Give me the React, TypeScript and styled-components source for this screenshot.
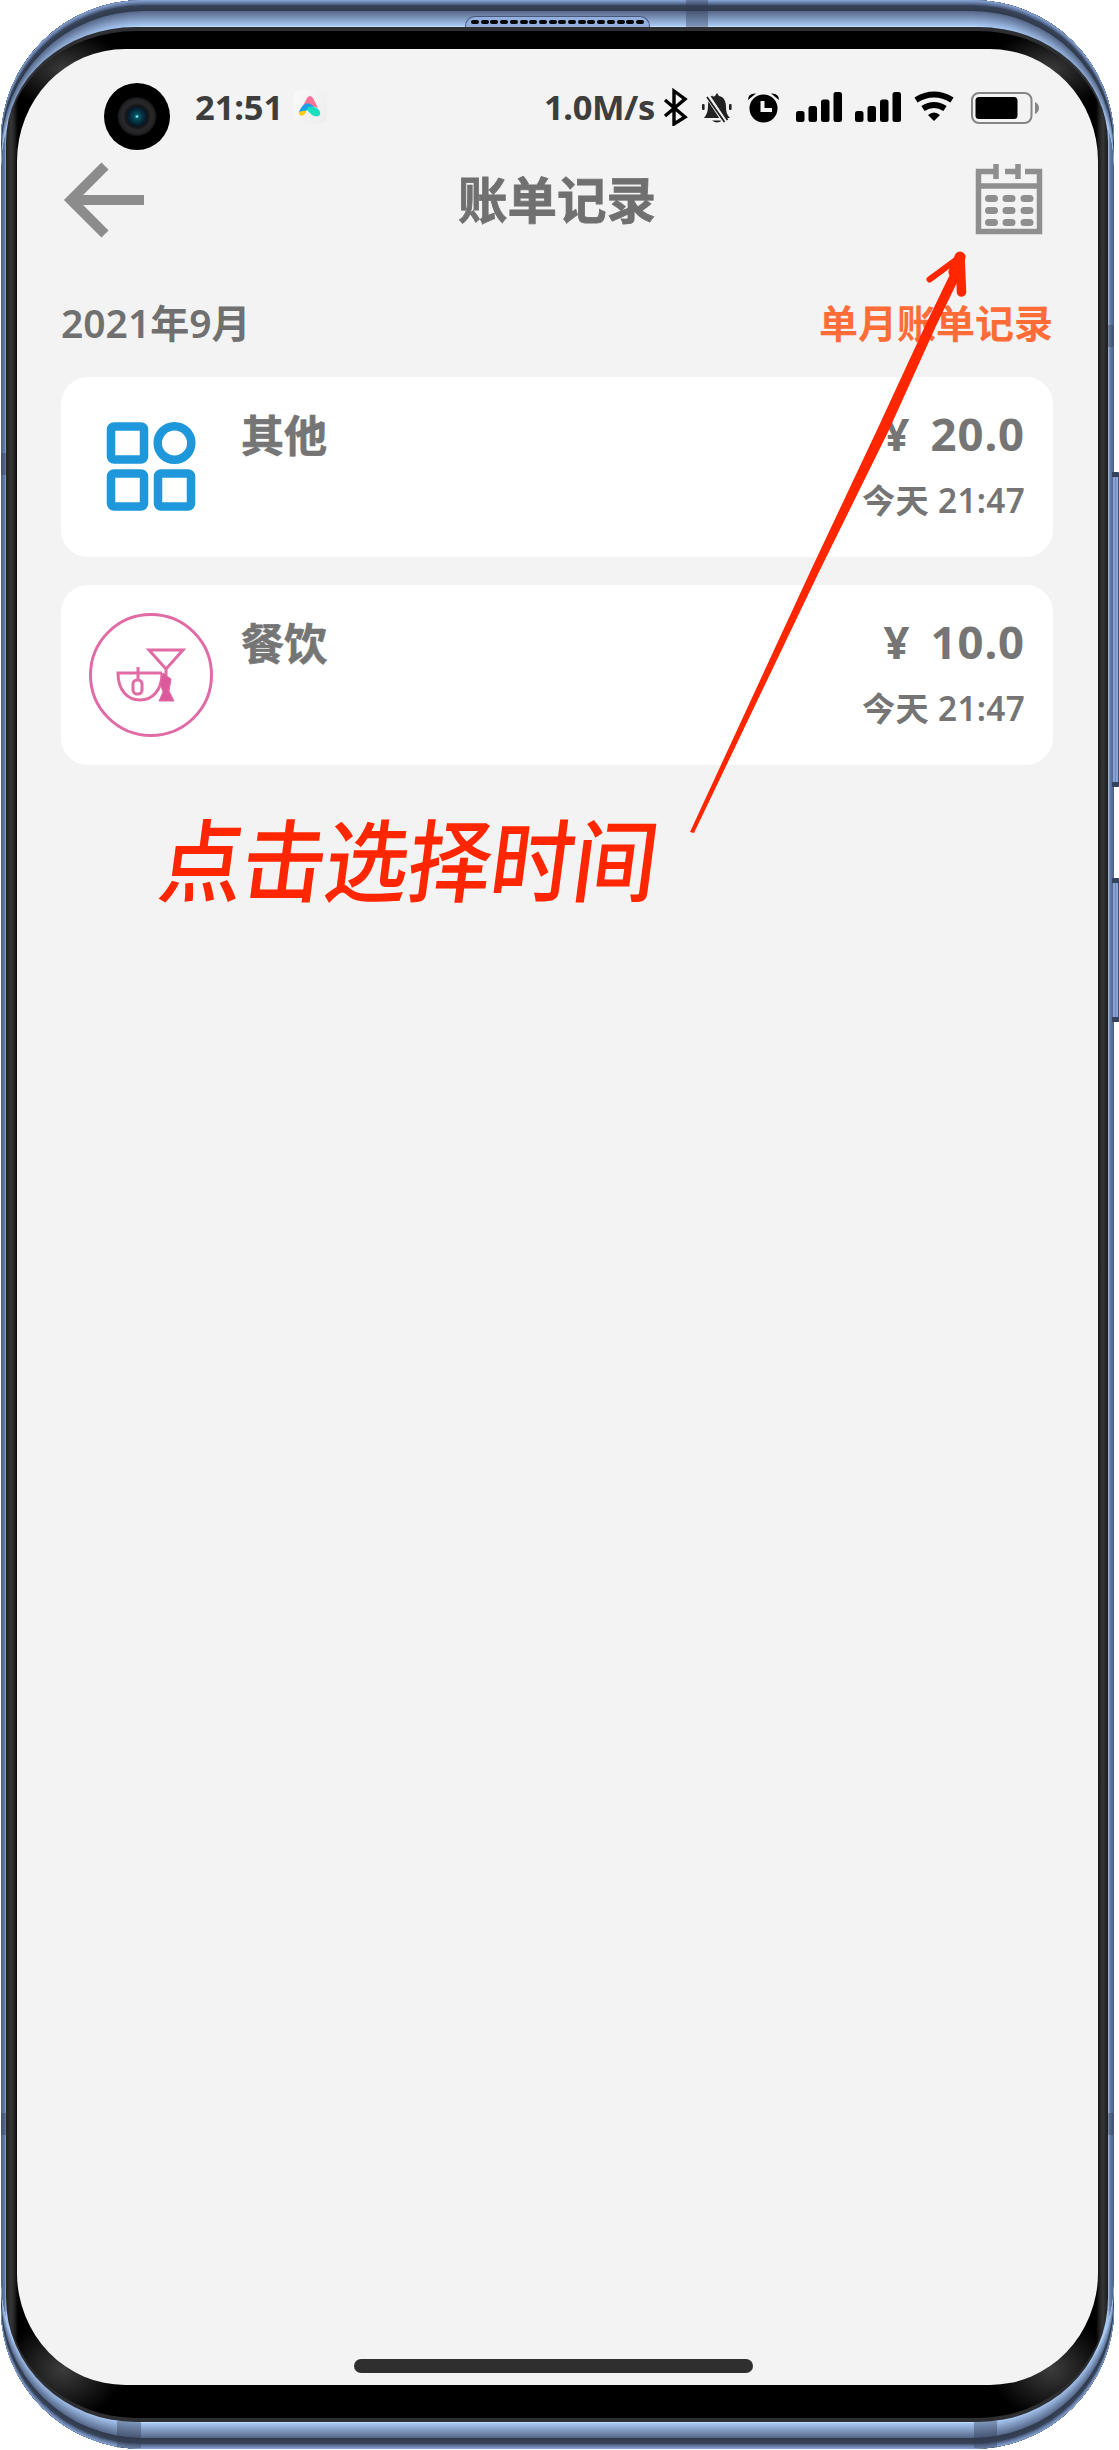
import React from 'react';
import styled, { createGlobalStyle, css } from 'styled-components';

const GlobalStyle = createGlobalStyle`
  * { box-sizing: border-box; }
  body { margin: 0; background: #fff; }
`;

const mix = (a: number[], b: number[], t: number) =>
  `rgb(${a.map((v, i) => Math.round(v + (b[i] - v) * t)).join(',')})`;

const metalColor = (k: number) => {
  if (k <= 5) return mix([132, 160, 207], [78, 96, 130], (k - 1) / 4);
  if (k <= 11) return mix([56, 68, 90], [49, 59, 76], (k - 6) / 5);
  if (k <= 26) return mix([88, 106, 140], [166, 197, 240], (k - 12) / 14);
  return 'rgb(190,222,250)';
};

/* Stacked inset shadows give the metal rim its layered shading. */
const rim = Array.from({ length: 27 }, (_, i) => i + 1)
  .map(k => `inset 0 ${k}px 0 0 ${metalColor(k)}, inset 0 ${-k}px 0 0 ${metalColor(k)}`)
  .join(', ');

const Stage = styled.div`
  position: relative;
  width: 1119px;
  height: 2450px;
  overflow: hidden;
  background: #fff;
  font-family: 'Noto Sans', 'Noto Sans CJK SC', sans-serif;
`;

const Phone = styled.div`
  width: 1113px;
  height: 2449px;
  margin-left: 1px;
  padding: 27px 6px 27px 5px;
  border-radius: 142px / 140px;
  background: linear-gradient(90deg, #4d6080 0, #657da6 4px, #a5c3ec 5px, #a5c3ec 1107px, #657da6 1109px, #4d6080 100%);
  box-shadow: ${rim};
`;

const Bezel = styled.div`
  height: 100%;
  padding: 22px 10px 37px 11px;
  border-radius: 130px 130px 130px 130px / 115px 115px 124px 124px;
  background:
    radial-gradient(ellipse 62px 38px at 58px 42px, #3a3a3a, transparent),
    radial-gradient(ellipse 62px 38px at 1044px 42px, #3a3a3a, transparent),
    radial-gradient(ellipse 60px 50px at 57px 2342px, #3c3c3c, transparent),
    radial-gradient(ellipse 60px 50px at 1045px 2342px, #3c3c3c, transparent),
    linear-gradient(90deg, #222 0, #363636 5px, #262626 8px, #000 12px, #000 1090px, #262626 1094px, #363636 1097px, #1c1c1c 100%);
  box-shadow: inset 0 4px 0 #2d2f33, inset 0 -4px 0 #2d2f33;
`;

const Screen = styled.main`
  display: flex;
  flex-direction: column;
  height: 100%;
  border-radius: 108px / 112px;
  background: #f3f3f3;
  padding: 35px 45px 12px 44px;
`;

const Detail = css`
  position: absolute;
`;

const SideButton = styled.div<{ $top: number; $height: number }>`
  ${Detail}
  left: 1112px;
  top: ${p => p.$top}px;
  width: 7px;
  height: ${p => p.$height}px;
  border-radius: 1px;
  border-top: 5px solid #35425c;
  border-bottom: 5px solid #35425c;
  background: linear-gradient(90deg, #536a96 0 1px, #8ba3d4 1px 3px, #6f88ba 3px 4px, #8da5d5 4px 6px, #435374 6px);
`;

const Antenna = styled.div<{ $x: number; $y: number; $w: number; $h: number }>`
  ${Detail}
  left: ${p => p.$x}px;
  top: ${p => p.$y}px;
  width: ${p => p.$w}px;
  height: ${p => p.$h}px;
  background: rgba(50, 60, 85, 0.38);
`;

const Speaker = styled.div`
  ${Detail}
  left: 465px;
  top: 16px;
  width: 185px;
  height: 11px;
  padding: 3px 5px 0;
  display: flex;
  justify-content: space-between;
  border: 1px solid #46587a;
  border-bottom: 0;
  border-radius: 10px 10px 0 0;
  background: #93afde;
`;

const Hole = styled.i`
  width: 8px;
  height: 4px;
  border-radius: 2px;
  background: #050505;
`;

const Camera = styled.div`
  flex: none;
  width: 66px;
  height: 67px;
  margin: -1px 0 0 -1px;
  border-radius: 50%;
  background: radial-gradient(circle, #7de9f0 0 0.5px, #0a5566 2px, #06313f 6px, #051a2b 9px, #151518 11px, #29292b 14px, #202022 18px, #000 20px);
`;

const StatusBar = styled.header`
  display: flex;
  align-items: center;
  height: 66px;
  padding: 0 11px 0 44px;
`;

const StatusText = styled.span<{ $spacing: number; $width: number }>`
  font: 700 34.5px/48px 'Noto Sans', sans-serif;
  letter-spacing: ${p => p.$spacing}px;
  width: ${p => p.$width}px;
  margin-top: -20px;
  white-space: nowrap;
  color: #3d3d3d;
`;

const StatusLeft = styled.div`
  display: flex;
  align-items: center;
  gap: 25px;
  flex: 1;
`;

const AppBadge = styled.div`
  width: 34px;
  height: 34px;
  margin: -20px 0 0 -14px;
  border-radius: 8px;
  background: linear-gradient(120deg, #fafafa, #ececec);
`;

const StatusIcons = styled.svg`
  display: block;
  flex: none;
  width: 380px;
  height: 40px;
  margin-top: -23px;
`;

const TitleBar = styled.nav`
  display: grid;
  grid-template-columns: 1fr auto 1fr;
  align-items: center;
  height: 98px;
  margin-top: 1px;
  svg { display: block; }
  svg:last-child { justify-self: end; margin-right: 1px; }
`;

const Title = styled.h1`
  margin: -4px 0 0;
  font: 700 49.5px/70px 'Noto Sans CJK SC', sans-serif;
  -webkit-text-stroke: 0.8px #707070;
  color: #707070;
`;

const SectionHead = styled.div`
  display: flex;
  justify-content: space-between;
  align-items: center;
  height: 60px;
  margin: 44px 0 24px;
  font-size: 39px;
  line-height: 60px;
  font-weight: 600;
`;

const Month = styled.span`
  color: #707070;
`;

const Filter = styled.span`
  color: #ff6c37;
`;

const List = styled.section`
  display: flex;
  flex-direction: column;
  gap: 28px;
`;

const Card = styled.article`
  display: flex;
  height: 180px;
  padding: 28px;
  border-radius: 27px;
  background: #fff;
  svg { flex: none; display: block; }
`;

const Name = styled.div`
  flex: 1;
  margin: -2px 0 0 28px;
  font: 700 43px/60px 'Noto Sans CJK SC', sans-serif;
  -webkit-text-stroke: 0.7px #757575;
  color: #757575;
`;

const Values = styled.div`
  display: flex;
  flex-direction: column;
  align-items: flex-end;
  margin-top: -2px;
  color: #757575;
  font-weight: 700;
`;

const Amount = styled.div`
  display: flex;
  gap: 20px;
  font-size: 45.5px;
  line-height: 60px;
  letter-spacing: 0.9px;
`;

const Time = styled.div`
  margin-top: 12px;
  font-size: 33.3px;
  line-height: 50px;
  font-weight: 600;
  letter-spacing: 0.3px;
`;

const Home = styled.div`
  width: 399px;
  height: 14px;
  margin: auto auto 0 293px;
  border-radius: 7px;
  background: #2f2f2f;
`;

const Note = styled.div`
  ${Detail}
  left: 161px;
  top: 796px;
  font: 500 90px/120px 'Noto Sans CJK SC', sans-serif;
  letter-spacing: -1px;
  white-space: nowrap;
  color: #ff2600;
  transform-origin: 0 50%;
  transform: scaleX(0.93) skewX(-8deg);
`;

const Pointer = styled.svg`
  ${Detail}
  left: 680px;
  top: 240px;
`;

const BackIcon = () => (
  <svg width="90" height="80" viewBox="0 0 90 80" fill="none" stroke="#8c8c8c" strokeWidth="10">
    <path d="M83 40H12M44 6L10 40l34 34" />
  </svg>
);

const CalendarIcon = () => (
  <svg width="80" height="80" viewBox="0 0 80 80" fill="none" stroke="#8f8f8f" strokeWidth="5.5">
    <path d="M24 11.500H6.500v60h61v-60H53M33 11.500h13M24 4v15M46 4v15M6.500 26h61" />
    <path strokeWidth="7" strokeLinecap="round" d="M16.500 38.500h6M34 38.500h6M52 38.500h6M16.500 50.500h6M34 50.500h6M52 50.500h6M16.500 62.500h6M34 62.500h6M52 62.500h6" />
  </svg>
);

const OtherIcon = () => (
  <svg width="124" height="124" viewBox="0 0 124 124" fill="none" stroke="#1e98db" strokeWidth="8.500">
    <rect x="22" y="21.500" width="33" height="33" rx="3" />
    <circle cx="85.500" cy="38" r="16.800" />
    <rect x="22" y="68.500" width="33" height="33" rx="3" />
    <rect x="69" y="68.500" width="33" height="33" rx="3" />
  </svg>
);

const FoodIcon = () => (
  <svg width="124" height="124" viewBox="0 0 124 124" fill="none" stroke="#e06ba5" strokeWidth="3">
    <circle cx="62" cy="62" r="60.500" />
    <path d="M60 37h34L77 56zM77 56v30" />
    <path d="M73 60H29c0 18 10 27 22 27s22-9 22-27M49 54v14" />
    <rect x="44" y="67" width="9" height="14" rx="4" />
    <path d="M74 60l8 6-2 12 5 10H70l4-9-3-9z" fill="#dc5a9b" strokeWidth="1" />
  </svg>
);

const Bars = ({ x }: { x: number }) => (
  <g>
    <rect x={x} y="25" width="8.500" height="11" rx="2.500" />
    <rect x={x + 12.5} y="20" width="8.500" height="16" rx="2.500" />
    <rect x={x + 25} y="13.500" width="8.500" height="22.500" rx="2.500" />
    <rect x={x + 37.5} y="6" width="8.500" height="30" rx="2.500" />
  </g>
);

const SystemIcons = () => (
  <StatusIcons viewBox="662 85 380 40">
    <path d="M665 99l20 17-11 7V90l11 8-20 17" fill="none" stroke="#000" strokeWidth="3.400" />
    <g fill="#222">
      <path d="M704 117c3-4 4-7 4-12 0-6 3-9 7-10l2-3 2 3c5 1 7 5 7 11 0 5 1 8 4 11z" />
      <path d="M712 119.500h10q-5 4-10 0z" />
      <rect x="702" y="103" width="2.600" height="6" rx="1" />
      <rect x="729" y="103" width="2.600" height="6" rx="1" />
    </g>
    <path d="M708.500 95l17 26" stroke="#f3f3f3" strokeWidth="6" />
    <path d="M707 96l17.500 25M711.500 95l16 24" stroke="#222" strokeWidth="1.800" />
    <circle cx="763.500" cy="107.500" r="14" />
    <path d="M748 99q0-7 8-6.500zM779 99q0-7-8-6.500z" />
    <path d="M762.500 100v9h9.500" fill="none" stroke="#f3f3f3" strokeWidth="4" />
    <g transform="translate(0 85)"><Bars x={796} /><Bars x={855} /></g>
    <g fill="none" stroke="#000">
      <path d="M916 99q18-11 36 0" strokeWidth="6" />
      <path d="M923 107.500q11-7 22 0" strokeWidth="6" />
    </g>
    <path d="M928 114q6-5 12 0l-6 6z" />
    <rect x="972" y="92" width="59.500" height="30" rx="7" fill="none" stroke="#858585" strokeWidth="2" />
    <rect x="975.500" y="96" width="42" height="22" rx="3.500" />
    <path d="M1035 101q4 2 4 6t-4 6z" fill="#858585" />
  </StatusIcons>
);

const records = [
  { name: '其他', amount: '20.0', time: '今天 21:47', Icon: OtherIcon },
  { name: '餐饮', amount: '10.0', time: '今天 21:47', Icon: FoodIcon },
];

export default function App() {
  return (
    <Stage>
      <GlobalStyle />
      <Phone>
        <Bezel>
          <Screen>
            <StatusBar>
              <StatusLeft>
                <Camera />
                <StatusText $spacing={-0.1} $width={87}>21:51</StatusText>
                <AppBadge>
                  <svg width="34" height="34" viewBox="0 0 34 34">
                    <path d="M10 16l4-8q3-4 6 0l5 10-8-3z" fill="#fb7396" />
                    <path d="M6 22c5-12 12-9 16-4l-5 2c-4-1-5 2-8 5z" fill="#1da0e8" />
                    <path d="M15 17c9-1 11 3 12 5 1 5-4 5-8 3l-5-5z" fill="#17dfc0" />
                    <path d="M6 22q5-2 7-1c0 5-8 7-7 1z" fill="#f8ce0d" />
                  </svg>
                </AppBadge>
              </StatusLeft>
              <StatusText $spacing={-0.4} $width={118}>1.0M/s</StatusText>
              <SystemIcons />
            </StatusBar>
            <TitleBar>
              <BackIcon />
              <Title>账单记录</Title>
              <CalendarIcon />
            </TitleBar>
            <SectionHead>
              <Month>2021年9月</Month>
              <Filter>单月账单记录</Filter>
            </SectionHead>
            <List>
              {records.map(({ name, amount, time, Icon }) => (
                <Card key={name}>
                  <Icon />
                  <Name>{name}</Name>
                  <Values>
                    <Amount><span>¥</span><span>{amount}</span></Amount>
                    <Time>{time}</Time>
                  </Values>
                </Card>
              ))}
            </List>
            <Home />
          </Screen>
        </Bezel>
      </Phone>
      <Speaker>{Array.from({ length: 18 }, (_, i) => <Hole key={i} />)}</Speaker>
      <Antenna $x={686} $y={0} $w={22} $h={27} />
      <Antenna $x={117} $y={2421} $w={24} $h={27} />
      <Antenna $x={974} $y={2421} $w={23} $h={27} />
      <Antenna $x={1} $y={453} $w={5} $h={22} />
      <Antenna $x={1} $y={2113} $w={5} $h={22} />
      <Antenna $x={1108} $y={325} $w={6} $h={22} />
      <Antenna $x={1108} $y={2113} $w={6} $h={22} />
      <SideButton $top={472} $height={315} />
      <SideButton $top={878} $height={144} />
      <Note>点击选择时间</Note>
      <Pointer width="300" height="600" viewBox="680 240 300 600" fill="none" stroke="#ff2600" strokeLinecap="round" strokeLinejoin="round">
        <path d="M690 832L811 570l66-140 49-106 29-60 9 4-28 58-48 106-70 142-124 259z" fill="#ff2600" stroke="none" />
        <path d="M929.500 279.500L960 257" strokeWidth="6" />
        <path d="M960 257l1.500 35" strokeWidth="9.500" />
        <path d="M960 257l-6 15" strokeWidth="11" />
      </Pointer>
    </Stage>
  );
}
